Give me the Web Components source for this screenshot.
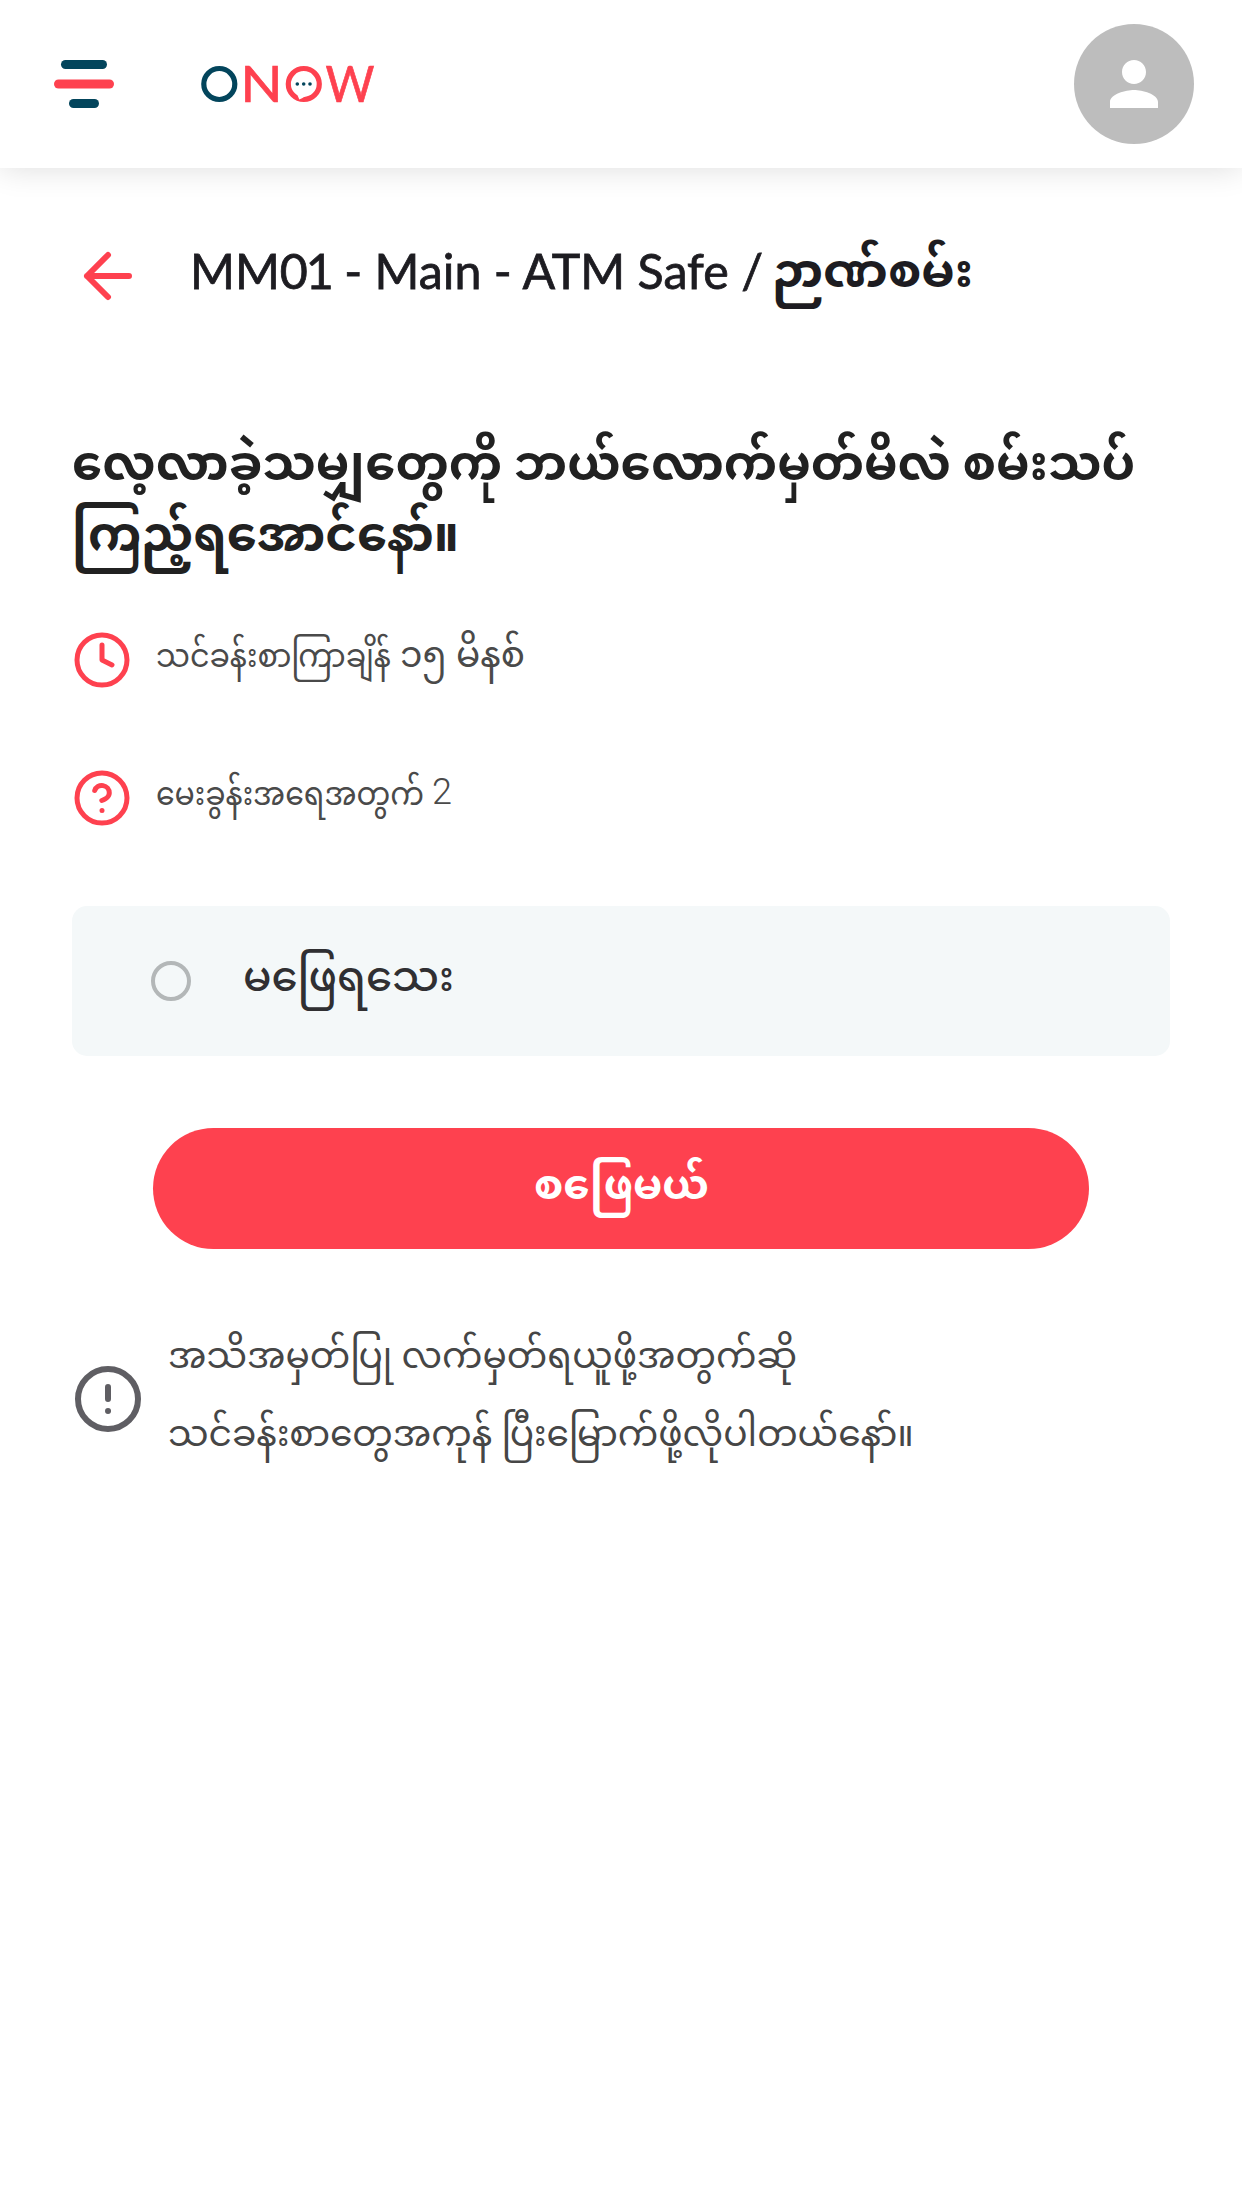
<!DOCTYPE html>
<html lang="my"><head><meta charset="utf-8"><title>ONOW</title>
<style>
body{margin:0;background:#fff;font-family:Lato,"Noto Sans Myanmar","Noto Sans",sans-serif;color:#1d1c21}
</style></head><body><quiz-page></quiz-page>
<script>
const define=(name,html,after)=>{
  const t=document.createElement('template');t.innerHTML=html;
  customElements.define(name,class extends HTMLElement{
    constructor(){super();this.attachShadow({mode:'open'}).append(t.content.cloneNode(true));}
    connectedCallback(){if(after)after(this);}
  });
};
// One line of text stretched to a set width, so that lines keep their measure in any font.
// "rise" lifts the baseline by that many pixels.
define('fit-text',`<style>:host{display:block;white-space:nowrap;flex:none;line-height:1.5}span{display:inline-block;transform-origin:0 50%}</style><span><slot></slot></span>`,el=>{
  const w=+el.getAttribute('width'),s=el.shadowRoot.querySelector('span');
  el.style.width=w+'px';
  el.style.fontSize=el.getAttribute('size')+'px';
  el.style.height=el.style.lineHeight=(el.getAttribute('line')||72)+'px';
  const n=s.getBoundingClientRect().width;
  if(n)s.style.transform='translateY('+-(el.getAttribute('rise')||0)+'px) scaleX('+w/n+')';
});
define('app-header',`<style>
:host{display:flex;box-sizing:border-box;height:168px;padding:0 48px 0 54px;align-items:center;box-shadow:0 0 30px rgba(0,0,0,.14);background:#fff}
svg{display:block}.logo{margin-left:74px}.avatar{margin-left:auto;width:120px;height:120px;border-radius:50%;background:#bdbdbd;display:grid;place-items:center}
</style>
<svg width="60" height="48" viewBox="0 0 60 48"><rect x="7" width="46" height="9" rx="4.5" fill="#03455c"/><rect y="19.5" width="60" height="9" rx="4.5" fill="#fe414f"/><rect x="15" y="39" width="30" height="9" rx="4.5" fill="#03455c"/></svg>
<svg class="logo" width="200" height="96" viewBox="188 36 200 96" font-family="Lato" font-size="50" ><circle cx="219.3" cy="84" r="15.5" fill="none" stroke="#03455c" stroke-width="5.200"/><text x="240.500" y="102" fill="#fe414f" stroke="#fe414f" stroke-width=".7" textLength="42" lengthAdjust="spacingAndGlyphs">N</text><circle cx="303.8" cy="84" r="15.5" fill="none" stroke="#fe414f" stroke-width="5.200"/><path d="M297 94L299.300 99.500Q303 98 307 95Z" fill="#fff"/><g fill="#03455c"><circle cx="297.300" cy="84" r="1.800"/><circle cx="303.700" cy="84" r="1.800"/><circle cx="310" cy="84" r="1.800"/></g><text x="325.500" y="102" fill="#fe414f" stroke="#fe414f" stroke-width=".7" textLength="49" lengthAdjust="spacingAndGlyphs">W</text></svg>
<div class="avatar"><svg width="72" height="72" viewBox="0 0 24 24" fill="#fff"><path d="M12 12c2.210 0 4-1.790 4-4s-1.790-4-4-4-4 1.790-4 4 1.790 4 4 4zm0 2c-2.670 0-8 1.340-8 4v2h16v-2c0-2.660-5.330-4-8-4z"/></svg></div>`);
define('line-icon',`<style>:host{display:block;flex:none}svg{display:block;width:100%;height:100%}</style><svg viewBox="0 0 24 24" fill="none" stroke="currentColor" stroke-width="2" stroke-linecap="round" stroke-linejoin="round"></svg>`,el=>{
  const s=el.getAttribute('size');el.style.width=el.style.height=s+'px';
  el.shadowRoot.querySelector('svg').innerHTML={
    back:'<path d="M19 12H5M12 19l-7-7 7-7"/>',
    clock:'<circle cx="12" cy="12" r="10"/><path d="M12 6v6l4 2"/>',
    help:'<circle cx="12" cy="12" r="10"/><path d="M9.090 9a3 3 0 0 1 5.830 1c0 2-3 3-3 3M12 17h.010"/>',
    alert:'<circle cx="12" cy="12" r="10"/><path d="M12 8v4M12 16h.010"/>'}[el.getAttribute('name')];
});
define('page-title',`<style>:host{display:flex;padding:72px 72px 0;height:72px}div{display:flex;margin-left:46px;gap:12px;-webkit-text-stroke:.8px}line-icon{color:#fe414f}</style>
<line-icon name="back" size="72"></line-icon><div><slot></slot></div>`);
define('info-row',`<style>:host{display:flex;height:60px;align-items:center;color:#4a4a4a}line-icon{color:#fe414f;margin-right:24px}div{display:flex}</style><line-icon size="60"></line-icon><div><slot></slot></div>`);
define('status-card',`<style>:host{display:flex;box-sizing:border-box;height:150px;border-radius:15px;background:#f4f8f9;align-items:center;padding-left:79px;gap:52px;color:#302f32}i{box-sizing:border-box;width:40px;height:40px;border:4px solid #b3b7b8;border-radius:50%}</style><i></i><slot></slot>`);
define('start-button',`<style>:host{display:block}button{all:unset;display:flex;width:100%;height:121px;border-radius:61px;background:#fe414f;color:#fff;align-items:center;justify-content:center}</style><button><slot></slot></button>`);
define('quiz-note',`<style>:host{display:flex;align-items:center;color:#464646}line-icon{color:#5f5e63;margin-right:24px}</style><line-icon name="alert" size="72"></line-icon><div><slot></slot></div>`);
define('quiz-page',`<style>
:host{display:block;min-height:2208px}
main{padding:0 72px}
h1{margin:116px 0 0;color:#212121;font-weight:700}
.b{font-weight:700}.m{font-weight:500}
.d{letter-spacing:-2px}.n{font-family:Roboto,sans-serif;font-weight:300}
info-row.one{margin-top:58px}info-row.two{margin-top:78px}
status-card{margin-top:78px}start-button{margin:72px 81px 0}quiz-note{margin-top:72px}
</style>
<app-header></app-header>
<page-title><fit-text width="573" size="49" line="72" rise="6">MM<span class="d">01</span> - Main - ATM Safe /</fit-text><fit-text class="b" style="margin-left:-3px;-webkit-text-stroke:0" width="201" size="46.5" line="72" rise="7">ဉာဏ်စမ်း</fit-text></page-title>
<main>
<h1><fit-text width="1063" size="48" line="72" rise="2.5">လေ့လာခဲ့သမျှတွေကို ဘယ်လောက်မှတ်မိလဲ စမ်းသပ်</fit-text><fit-text width="387" size="48" line="72" rise="3">ကြည့်ရအောင်နော်။</fit-text></h1>
<info-row class="one" icon="clock"><fit-text width="235" size="32" line="60" rise="5.5">သင်ခန်းစာကြာချိန်</fit-text><fit-text style="margin-left:9px" width="125" size="36" line="60" rise="7">၁၅ မိနစ်</fit-text></info-row>
<info-row class="two" icon="help"><fit-text width="268" size="32" line="60" rise="5.5">မေးခွန်းအရေအတွက်</fit-text><fit-text class="n" style="margin-left:8px" width="20" size="37" line="60" rise="6">2</fit-text></info-row>
<status-card><fit-text class="m" width="211" size="42" line="72" rise="6.5">မဖြေရသေး</fit-text></status-card>
<start-button><fit-text class="b" width="175" size="42" line="72" rise="6.5">စဖြေမယ်</fit-text></start-button>
<quiz-note><fit-text width="629" size="36" line="78" rise="6">အသိအမှတ်ပြု လက်မှတ်ရယူဖို့အတွက်ဆို</fit-text><fit-text width="746" size="36" line="78" rise="6">သင်ခန်းစာတွေအကုန် ပြီးမြောက်ဖို့လိုပါတယ်နော်။</fit-text></quiz-note>
</main>`,el=>{
  el.shadowRoot.querySelectorAll('info-row').forEach(r=>{
    const i=document.createElement('line-icon');i.setAttribute('name',r.getAttribute('icon'));i.setAttribute('size','60');
    r.shadowRoot.querySelector('line-icon').replaceWith(i);
  });
});
</script></body></html>
